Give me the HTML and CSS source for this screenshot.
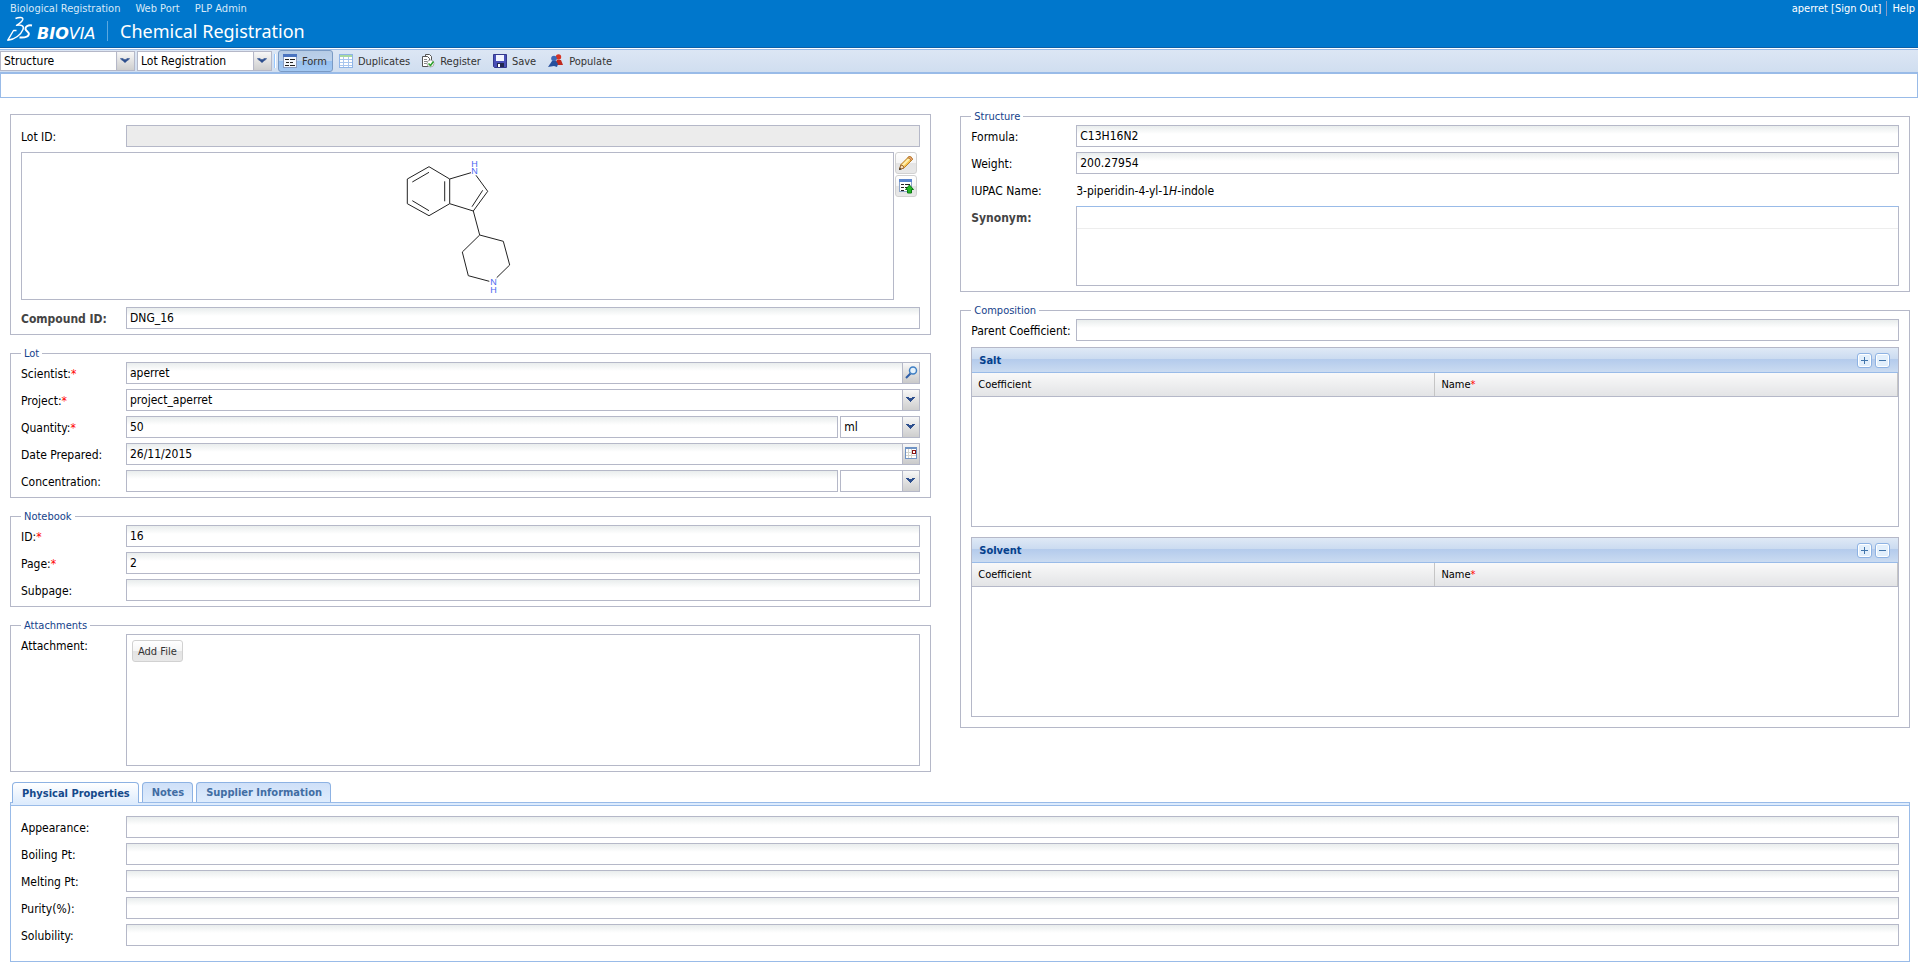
FILE: index.html
```html
<!DOCTYPE html>
<html lang="en">
<head>
    <meta charset="UTF-8">
    <title>Chemical Registration</title>
    <link rel="stylesheet" href="styles.css">
</head>
<body>
    <header class="banner">
        <div class="top-links">
            <nav class="nav">
                <a href="#">Biological Registration</a>
                <a href="#">Web Port</a>
                <a href="#">PLP Admin</a>
            </nav>
            <div class="user">
                <span>aperret <a href="#">[Sign Out]</a></span>
                <a class="help" href="#">Help</a>
            </div>
        </div>
        <div class="brand">
            <svg class="ds" width="26" height="30" viewBox="0 0 26 30" fill="none" stroke="#fff" stroke-linejoin="round">
                <path d="M8.500 2.500C12 1 16.500 1 15.800 3.500C15 6 12.500 7.500 9.500 9.300C14 8.500 17.500 9.500 16 13.500C14 18.500 8 23.500 .8 24.200L6.500 14.500H9.500" stroke-width="1.400"/>
                <path d="M25 9.500C21 8.800 18 10.500 18.500 13C19 15.500 22.500 16 21.800 18.500C21 21.300 17 21.800 12.500 21.500" stroke-width="2"/>
            </svg>
            <span class="brand-name"><b>BIO</b>VIA</span>
            <h1 class="title">Chemical Registration</h1>
        </div>
    </header>

    <div class="toolbar">
        <select class="combo bar-combo" aria-label="Record type"><option>Structure</option></select>
        <select class="combo bar-combo" aria-label="Form type"><option>Lot Registration</option></select>
        <span class="separator"></span>
        <button class="tool pressed">
            <svg width="14" height="14" viewBox="0 0 14 14">
                <rect x="0.5" y="0.5" width="13" height="13" fill="#f4f8fd" stroke="#8a9cc0"/>
                <rect width="14" height="3" fill="#4a74c0"/>
                <path d="M2 5.500h4M3 8.500h3M2 11.500h4M7 5.500h5M7 8.500h3M7 11.500h5" stroke="#222"/>
            </svg>
            Form
        </button>
        <button class="tool">
            <svg width="14" height="14" viewBox="0 0 14 14">
                <rect x="0.500" y="0.500" width="13" height="13" fill="#fff" stroke="#8fb4e6"/>
                <rect x="1" y="1" width="12" height="2" fill="#a8d8a0"/>
                <path d="M1 5.500h12M1 8.500h12M1 11.500h12M4.500 3v10M9.500 3v10" stroke="#a9c6ee"/>
            </svg>
            Duplicates
        </button>
        <button class="tool">
            <svg width="13" height="14" viewBox="0 0 13 14">
                <path d="M3.500 2.500V.5h4l2 2v4M.5 2.500h5l2 2v8h-7z" fill="#fff" stroke="#555"/>
                <path d="M2 5.500h3M2 7.500h4M2 9.500h3" stroke="#888"/>
                <circle cx="8.500" cy="9.500" r="3.500" fill="#fff" stroke="#aaa"/>
                <path d="M6.500 9.500l2 2 3-4" fill="none" stroke="#2ca02c" stroke-width="1.500"/>
            </svg>
            Register
        </button>
        <button class="tool">
            <svg width="14" height="14" viewBox="0 0 14 14">
                <path d="M.5.5h13v13h-12l-1-1z" fill="#4a50b8" stroke="#34388c"/>
                <rect x="3" y="1" width="8" height="6" fill="#f2f4ff"/>
                <rect x="4" y="9" width="7" height="4" fill="#222650"/>
                <rect x="5" y="10" width="2" height="3" fill="#fff"/>
            </svg>
            Save
        </button>
        <button class="tool">
            <svg width="16" height="14" viewBox="0 0 16 14">
                <circle cx="10.500" cy="3" r="2.700" fill="#d63324"/>
                <path d="M6 11l3-5h4l2 5z" fill="#c02a1e"/>
                <circle cx="6" cy="4.500" r="2.800" fill="#3c68b8"/>
                <path d="M0 13l2-3 2-3h4l2 3-1 3-3-1z" fill="#27509c"/>
            </svg>
            Populate
        </button>
    </div>
    <div class="message-bar"></div>

    <main class="page">
        <div class="columns">
            <div class="column">
                <fieldset class="group untitled">
                    <div class="row">
                        <label for="lot-id">Lot ID:</label>
                        <input type="text" id="lot-id" class="text" disabled>
                    </div>
                    <div class="sketch-row">
                        <div class="sketch">
                            <svg width="110" height="146" viewBox="0 0 110 146" fill="none" stroke="#222">
                                <path d="M26 13.700L46.700 26V50.700L26 62.700 4.300 50.700V26zM26 19.300L9.300 29M9.300 47.700L26 57.700M41.700 28.300V48.300"/>
                                <path d="M46.700 26L68 19.700M73 22.300L84.700 38.300 70.300 58 46.700 50.700M79.700 37.300L69 53.700M70.300 58L76.700 82"/>
                                <path d="M93.700 124.700L106.700 112 100.300 88.300 76.700 82 59.300 99 65.300 122.700 86.300 128.300"/>
                                <g class="atom">
                                    <text x="71.500" y="14">H</text>
                                    <text x="71.500" y="21">N</text>
                                    <text x="90.500" y="132">N</text>
                                    <text x="90.500" y="140">H</text>
                                </g>
                            </svg>
                        </div>
                        <div class="sketch-tools">
                            <button class="btn icon-btn" aria-label="Edit structure">
                                <svg width="16" height="16" viewBox="0 0 16 16">
                                    <path d="M1.500 14.500l1.500-5 8-8q3 0 3.500 3l-8 8z" fill="#f7c553" stroke="#b87d28"/>
                                    <path d="M4.500 10.500l7-7" stroke="#fff0b0" stroke-width="2"/>
                                    <path d="M1.500 14.500l1.300-4.500q3 0 3.200 3z" fill="#f6dfbd" stroke="#a0692c"/>
                                    <path d="M1 15l.7-2.500 1.800 1.700z" fill="#333"/>
                                    <path d="M11 1.500q3 0 3.500 3l-1.500 1.300q-.5-3-3.300-3z" fill="#f0a890" stroke="#b87d28"/>
                                </svg>
                            </button>
                            <button class="btn icon-btn" aria-label="Insert structure">
                                <svg width="16" height="16" viewBox="0 0 16 16">
                                    <rect x="1.500" y="1.500" width="12" height="12" fill="#fff" stroke="#8da4c8"/>
                                    <rect x="1" y="1" width="13" height="3" fill="#5b86cf"/>
                                    <path d="M3 6.500h3M3 9.500h3M3 12.500h3M7 6.500h5M7 9.500h3" stroke="#222"/>
                                    <path d="M11.500 7l4 4.500h-2v3.500h-4v-3.500h-2z" fill="#25b825" stroke="#0c7a12"/>
                                </svg>
                            </button>
                        </div>
                    </div>
                    <div class="row">
                        <label for="compound-id" class="strong">Compound ID:</label>
                        <input type="text" id="compound-id" class="text" value="DNG_16">
                    </div>
                </fieldset>

                <fieldset class="group">
                    <legend>Lot</legend>
                    <div class="row">
                        <label for="scientist">Scientist:<span class="req">*</span></label>
                        <input type="text" id="scientist" class="text" value="aperret">
                        <button class="trigger" aria-label="Find scientist">
                            <svg width="13" height="13" viewBox="0 0 13 13" fill="none">
                                <path d="M1 12l4.500-4.500" stroke="#2f5ea8" stroke-width="2"/>
                                <circle cx="8" cy="4.500" r="3.500" fill="#e4f1fb" stroke="#3f7fc4" stroke-width="1.500"/>
                            </svg>
                        </button>
                    </div>
                    <div class="row">
                        <label for="project">Project:<span class="req">*</span></label>
                        <select id="project" class="combo"><option>project_aperret</option></select>
                    </div>
                    <div class="row">
                        <label for="quantity">Quantity:<span class="req">*</span></label>
                        <input type="text" id="quantity" class="text" value="50">
                        <select class="combo unit" aria-label="Quantity unit"><option>ml</option></select>
                    </div>
                    <div class="row">
                        <label for="prepared">Date Prepared:</label>
                        <input type="text" id="prepared" class="text" value="26/11/2015">
                        <button class="trigger" aria-label="Pick date">
                            <svg width="12" height="12" viewBox="0 0 12 12">
                                <rect x="0.500" y="0.500" width="11" height="11" fill="#fff" stroke="#6f93c4"/>
                                <rect width="12" height="2" fill="#6f93c4"/>
                                <path d="M1 5.500h10M1 8.500h10M3.500 2v9M6.500 2v9" stroke="#d5d5cd"/>
                                <rect x="7.500" y="3.500" width="3" height="3" fill="#fff" stroke="#8c1414"/>
                            </svg>
                        </button>
                    </div>
                    <div class="row">
                        <label for="concentration">Concentration:</label>
                        <input type="text" id="concentration" class="text">
                        <select class="combo unit" aria-label="Concentration unit"><option></option></select>
                    </div>
                </fieldset>

                <fieldset class="group">
                    <legend>Notebook</legend>
                    <div class="row">
                        <label for="notebook-id">ID:<span class="req">*</span></label>
                        <input type="text" id="notebook-id" class="text" value="16">
                    </div>
                    <div class="row">
                        <label for="notebook-page">Page:<span class="req">*</span></label>
                        <input type="text" id="notebook-page" class="text" value="2">
                    </div>
                    <div class="row">
                        <label for="subpage">Subpage:</label>
                        <input type="text" id="subpage" class="text">
                    </div>
                </fieldset>

                <fieldset class="group">
                    <legend>Attachments</legend>
                    <div class="row">
                        <label for="add-file">Attachment:</label>
                        <div class="files">
                            <button id="add-file" class="btn">Add File</button>
                        </div>
                    </div>
                </fieldset>
            </div>

            <div class="column right">
                <fieldset class="group">
                    <legend>Structure</legend>
                    <div class="row">
                        <label for="formula">Formula:</label>
                        <input type="text" id="formula" class="text" value="C13H16N2">
                    </div>
                    <div class="row">
                        <label for="weight">Weight:</label>
                        <input type="text" id="weight" class="text" value="200.27954">
                    </div>
                    <div class="row">
                        <span class="label">IUPAC Name:</span>
                        <output class="iupac">3-piperidin-4-yl-1<i>H</i>-indole</output>
                    </div>
                    <div class="row">
                        <span class="label strong">Synonym:</span>
                        <div class="synonyms"><div class="synonym"></div></div>
                    </div>
                </fieldset>

                <fieldset class="group composition">
                    <legend>Composition</legend>
                    <div class="row">
                        <label for="parent-coefficient">Parent Coefficient:</label>
                        <input type="text" id="parent-coefficient" class="text">
                    </div>
                    <section class="grid">
                        <div class="grid-title">
                            <h2>Salt</h2>
                            <button class="mini" aria-label="Add salt"><svg width="7" height="7" viewBox="0 0 7 7"><path d="M0 3.500h7M3.500 0v7" stroke="#4275ab"/></svg></button>
                            <button class="mini" aria-label="Remove salt"><svg width="7" height="7" viewBox="0 0 7 7"><path d="M0 3.500h7" stroke="#4275ab"/></svg></button>
                        </div>
                        <table>
                            <thead><tr><th>Coefficient</th><th>Name<span class="req">*</span></th></tr></thead>
                        </table>
                    </section>
                    <section class="grid">
                        <div class="grid-title">
                            <h2>Solvent</h2>
                            <button class="mini" aria-label="Add solvent"><svg width="7" height="7" viewBox="0 0 7 7"><path d="M0 3.500h7M3.500 0v7" stroke="#4275ab"/></svg></button>
                            <button class="mini" aria-label="Remove solvent"><svg width="7" height="7" viewBox="0 0 7 7"><path d="M0 3.500h7" stroke="#4275ab"/></svg></button>
                        </div>
                        <table>
                            <thead><tr><th>Coefficient</th><th>Name<span class="req">*</span></th></tr></thead>
                        </table>
                    </section>
                </fieldset>
            </div>
        </div>

        <div class="tabs">
            <button class="tab active">Physical Properties</button>
            <button class="tab">Notes</button>
            <button class="tab">Supplier Information</button>
        </div>
        <div class="tab-strip"></div>
        <div class="tab-panel">
            <div class="row">
                <label for="appearance">Appearance:</label>
                <input type="text" id="appearance" class="text">
            </div>
            <div class="row">
                <label for="boiling">Boiling Pt:</label>
                <input type="text" id="boiling" class="text">
            </div>
            <div class="row">
                <label for="melting">Melting Pt:</label>
                <input type="text" id="melting" class="text">
            </div>
            <div class="row">
                <label for="purity">Purity(%):</label>
                <input type="text" id="purity" class="text">
            </div>
            <div class="row">
                <label for="solubility">Solubility:</label>
                <input type="text" id="solubility" class="text">
            </div>
        </div>
    </main>
</body>
</html>
```
FILE: styles.css
```css
* {
    box-sizing: border-box;
}
body {
    margin: 0;
    background-color: #fff;
    color: #000;
    font-family: Tahoma, "DejaVu Sans Condensed", sans-serif;
    font-size: 12px;
    line-height: 15px;
}
input, select, button {
    font: inherit;
    color: inherit;
    margin: 0;
    border-radius: 0;
}
button {
    cursor: pointer;
}
svg {
    display: block;
    flex: none;
}

/* header */
.banner {
    height: 48px;
    background-color: #0077cc;
    border-bottom: 1px solid #0b5fa8;
    color: #fff;
    font-size: 11px;
}
.banner a {
    color: inherit;
    text-decoration: none;
}
.top-links {
    display: flex;
    justify-content: space-between;
    height: 16px;
    padding: 1px 3px 0 10px;
}
.nav {
    display: flex;
    gap: 15px;
    color: #d6e9f8;
}
.user {
    display: flex;
    gap: 5px;
}
.help {
    border-left: 1px solid #8a9cc8;
    padding-left: 5px;
}
.brand {
    display: flex;
    align-items: center;
    height: 30px;
    padding: 0 7px;
}
.brand-name {
    width: 74px;
    padding: 4px 0 0 4px;
    font-family: "DejaVu Sans", sans-serif;
    font-size: 16px;
    font-style: italic;
}
.title {
    margin: 0;
    padding-left: 12px;
    border-left: 1px solid #5ba8e0;
    font-family: "Noto Sans", sans-serif;
    font-size: 18px;
    font-weight: 400;
    line-height: 20px;
}

/* toolbar */
.toolbar {
    display: flex;
    align-items: center;
    height: 25px;
    margin-top: 1px;
    border-top: 1px solid #99bbe8;
    border-bottom: 2px solid #99bbe8;
    background: linear-gradient(#dce6f4, #d0def0);
}
.bar-combo.combo {
    flex: none;
    width: 135px;
    height: 20px;
    margin-right: 2px;
    padding-left: 3px;
    background-size: 18px 20px;
}
.separator {
    height: 14px;
    margin-right: 2px;
    border-left: 1px solid #98c8ff;
    border-right: 1px solid #fff;
}
.tool {
    display: flex;
    align-items: center;
    gap: 5px;
    height: 22px;
    margin-right: 1px;
    padding: 0 5px 0 4px;
    border: 1px solid transparent;
    border-radius: 3px;
    background: none;
    color: #333;
    font-size: 11px;
}
.tool.pressed {
    border-color: #7a9ac4;
    background: linear-gradient(#b6cbe4 0, #bcd2ed 50%, #96c0f0 50%, #a3c8f2);
}
.message-bar {
    height: 24px;
    border: 1px solid #99bbe8;
    border-top: 0;
}

/* form layout */
.page {
    padding: 0 8px 4px 10px;
}
.columns {
    display: grid;
    grid-template-columns: 97fr 100fr;
    gap: 29px;
    padding-top: 16px;
}
.column.right {
    margin-top: -5px;
}
.group {
    min-width: 0;
    margin: 0 0 11px;
    padding: 1px 10px 5px;
    border: 1px solid #b5b8c8;
}
.group:last-child {
    margin-bottom: 10px;
}
.group.untitled {
    padding-top: 10px;
}
.group.composition {
    padding-bottom: 10px;
}
legend {
    padding: 0 3px;
    color: #15428b;
    font-size: 11px;
    line-height: 15px;
}
.row {
    display: flex;
}
.row + .row {
    margin-top: 5px;
}
.row label, .row .label {
    flex: none;
    width: 105px;
    padding-top: 5px;
    white-space: nowrap;
}
.row .strong {
    color: #444;
    font-weight: bold;
}
.req {
    color: #f00;
}
.text, .combo {
    flex: 1;
    min-width: 0;
    height: 22px;
    padding: 0 3px 1px;
    border: 1px solid #b5b8c8;
    outline: none;
    background: #fff linear-gradient(#e9eded, #fff 8px) no-repeat;
}
.text:disabled {
    background: #ececec;
}
.combo {
    padding-bottom: 0;
    appearance: none;
    background: #fff url("data:image/svg+xml,%3Csvg xmlns='http://www.w3.org/2000/svg' width='17' height='22' preserveAspectRatio='none'%3E%3Cdefs%3E%3ClinearGradient id='g' x2='0' y2='1'%3E%3Cstop stop-color='%23f8f8f8'/%3E%3Cstop offset='.45' stop-color='%23e2e2e2'/%3E%3Cstop offset='1' stop-color='%23cacaca'/%3E%3C/linearGradient%3E%3C/defs%3E%3Crect width='17' height='22' fill='url(%23g)'/%3E%3Cpath d='M.5 0v22' stroke='%23b5b8c8'/%3E%3Cpath d='M4 7h3v1h3v-1h3v1h-1v1h-1v1h-1v1h-1v1h-1v-1h-1v-1h-1v-1h-1v-1h-1z' fill='%232d4f8e'/%3E%3C/svg%3E") right top no-repeat;
}
.unit {
    flex: none;
    width: 80px;
    margin-left: 2px;
}
.trigger {
    display: grid;
    place-items: center;
    flex: none;
    width: 17px;
    height: 22px;
    padding: 0 0 2px;
    border: 1px solid #b5b8c8;
    border-left: 0;
    background: linear-gradient(#f8f8f8, #e2e2e2 45%, #cacaca);
}

/* structure drawing */
.sketch-row {
    display: flex;
    gap: 1px;
    margin: 5px 0 7px;
    padding-right: 3px;
}
.sketch {
    display: flex;
    justify-content: center;
    flex: 1;
    height: 148px;
    border: 1px solid #b5b8c8;
}
.atom {
    fill: #4a66f0;
    stroke: none;
    font-family: "Liberation Sans", sans-serif;
    font-size: 9px;
    text-anchor: middle;
}
.sketch-tools {
    display: flex;
    flex-direction: column;
    gap: 1px;
}
.btn {
    height: 22px;
    padding: 0 5px;
    border: 1px solid #d1d1d1;
    border-radius: 3px;
    background: linear-gradient(#fff, #f6f6f6 48%, #e4e4e4 52%, #e8e8e8);
    color: #333;
    font-size: 11px;
}
.icon-btn {
    display: grid;
    place-items: center;
    width: 22px;
    padding: 0;
}
.files {
    flex: 1;
    height: 132px;
    padding: 5px;
    border: 1px solid #b5b8c8;
}
.iupac {
    height: 22px;
    padding-top: 5px;
}
.synonyms {
    flex: 1;
    height: 80px;
    border: 1px solid #b5b8c8;
    border-top-color: #99bbe8;
}
.synonym {
    height: 22px;
    border-bottom: 1px solid #ededed;
}

/* salt and solvent grids */
.grid {
    height: 180px;
    margin-top: 10px;
    border: 1px solid #b5b8c8;
}
.row + .grid {
    margin-top: 6px;
}
.grid-title {
    display: flex;
    align-items: center;
    gap: 3px;
    height: 25px;
    padding: 0 8px 0 7px;
    border-bottom: 1px solid #99bbe8;
    background: linear-gradient(#dfe9f6, #cbdbf0 45%, #b4cbec 48%, #cadbf1);
}
.grid-title h2 {
    flex: 1;
    margin: 0;
    color: #04408c;
    font-size: 11px;
}
.mini {
    display: grid;
    place-items: center;
    width: 15px;
    height: 15px;
    padding: 0;
    border: 1px solid #8db2e3;
    border-radius: 3px;
    background-color: #e2effc;
    box-shadow: inset 0 0 0 1px #fff;
}
table {
    width: 100%;
    table-layout: fixed;
    border-collapse: collapse;
}
th {
    height: 23px;
    padding: 0 6px;
    border-right: 1px solid #c5c5c5;
    border-bottom: 1px solid #b5b8c8;
    background: linear-gradient(#f9f9f9, #e3e4e6);
    font-size: 11px;
    font-weight: 400;
    text-align: left;
}

/* tabs */
.tabs {
    display: flex;
    gap: 3px;
    padding-left: 2px;
}
.tab {
    height: 20px;
    padding: 0 8px 0 9px;
    border: 1px solid #8db2e3;
    border-bottom: 0;
    border-radius: 4px 4px 0 0;
    background: linear-gradient(#cfe0f8, #deecfd);
    color: #416da3;
    font-size: 11px;
    font-weight: bold;
}
.tab.active {
    z-index: 1;
    height: 21px;
    margin-bottom: -1px;
    background: linear-gradient(#fff, #deecfd);
    color: #15498b;
}
.tab-strip {
    height: 3px;
    border: 1px solid #99bbe8;
    border-bottom: 0;
    background-color: #deecfd;
}
.tab-panel {
    padding: 10px 10px 15px;
    border: 1px solid #99bbe8;
}
```
